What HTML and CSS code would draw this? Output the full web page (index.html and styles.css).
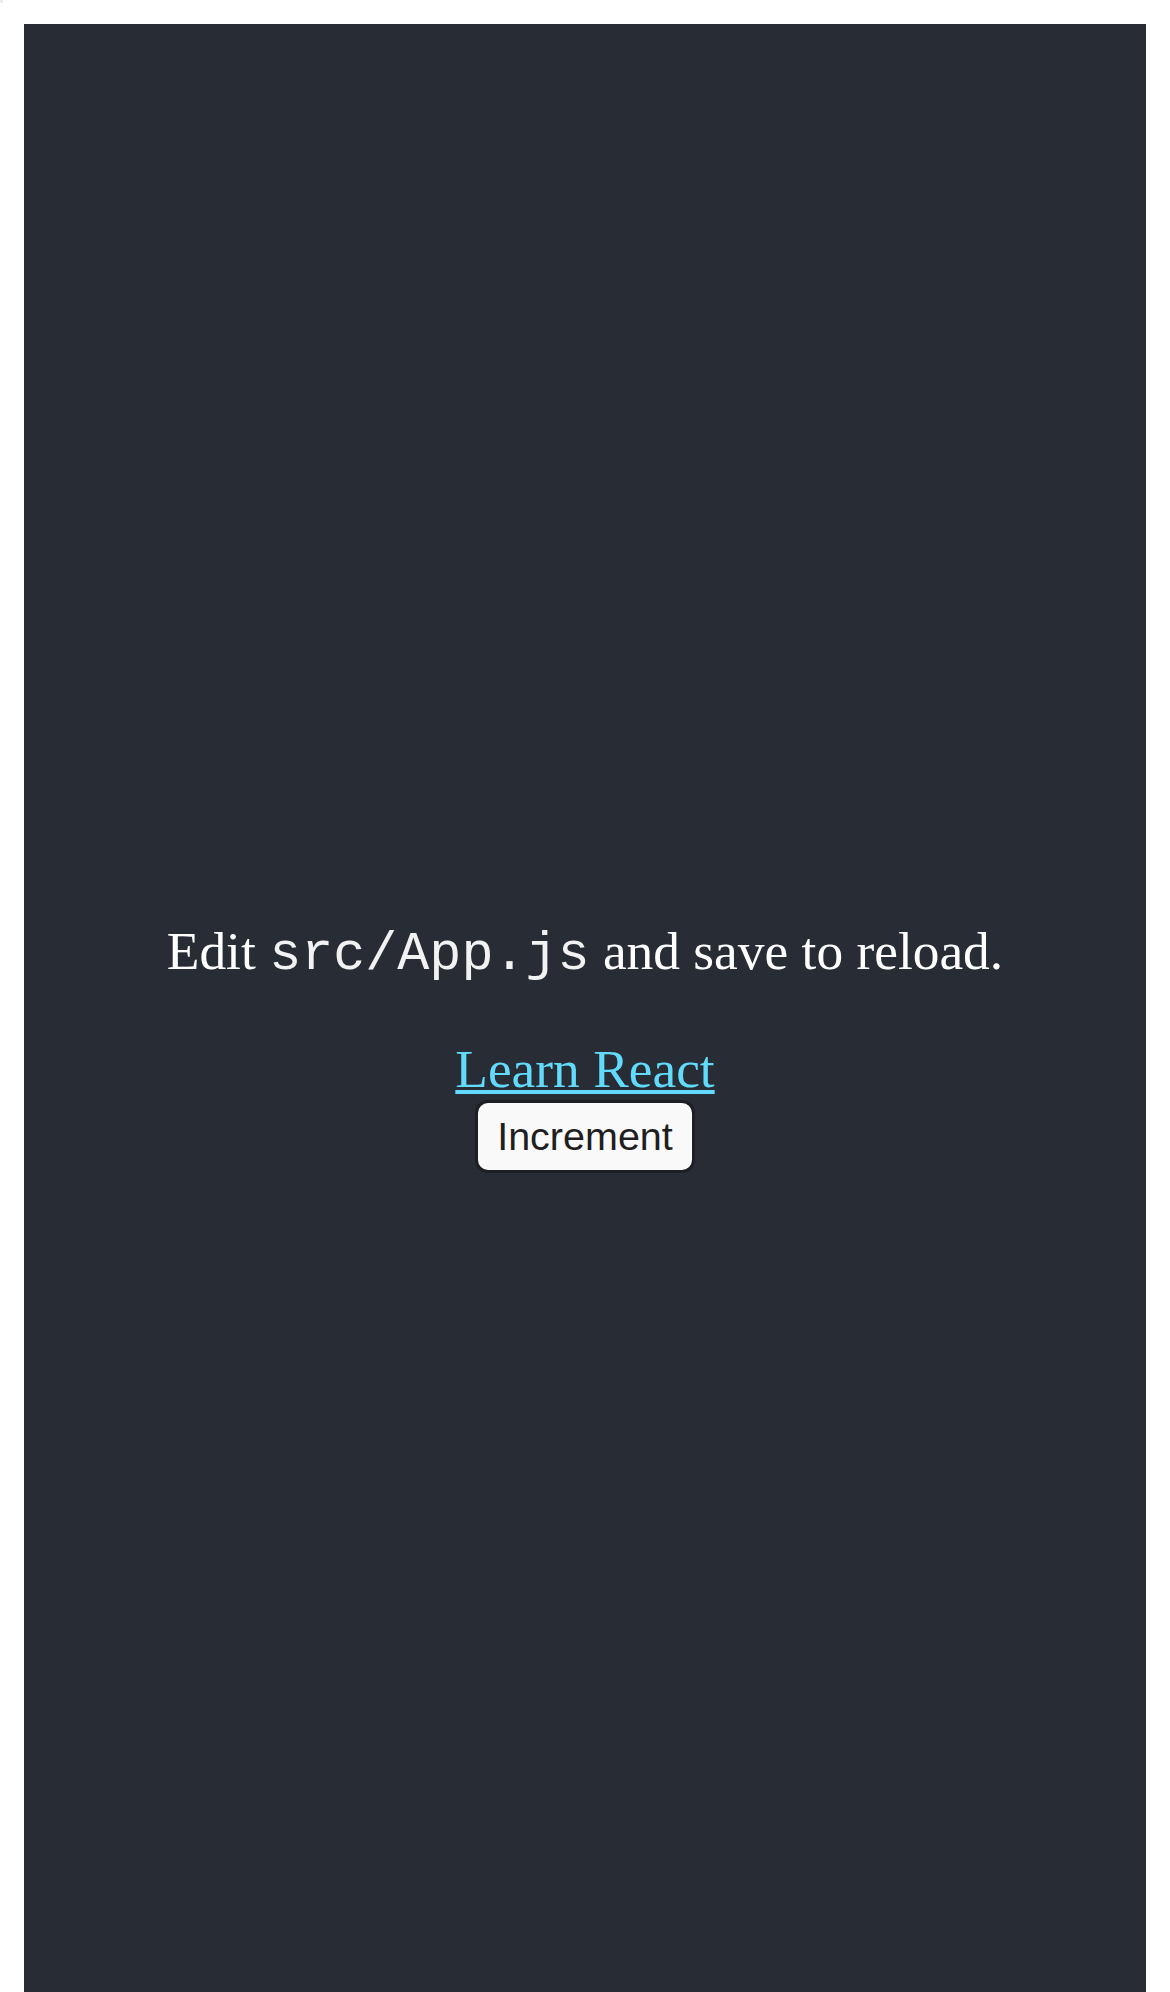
FILE: index.html
```html
<!DOCTYPE html>
<html lang="en">
<head>
<meta charset="utf-8">
<title>React App</title>
<link rel="stylesheet" href="styles.css">
</head>
<body>
<div class="corner-dot"></div>
<div class="app">
  <header class="app-header">
    <p class="intro">Edit <code>src/App.js</code> and save to reload.</p>
    <a class="app-link" href="#">Learn React</a>
    <button class="inc-btn" type="button">Increment</button>
  </header>
</div>
</body>
</html>
```
FILE: styles.css
```css
html, body {
  background: #ffffff;
}
body {
  margin: 24px;
  font-family: "Liberation Serif", "Times New Roman", serif;
}
.corner-dot {
  position: absolute;
  left: 0;
  top: 0;
  width: 3px;
  height: 3px;
  background: #ececec;
}
.app {
  text-align: center;
}
.app-header {
  background-color: #282c34;
  min-height: 1991px;
  display: flex;
  flex-direction: column;
  align-items: center;
  justify-content: center;
  font-size: 53.4px;
  color: #ffffff;
}
.intro {
  margin: 53.4px 0;
}
.intro code {
  font-family: "Liberation Mono", "Courier New", monospace;
  color: #f2f2f2;
}
.app-link {
  color: #61dafb;
  text-decoration-thickness: 4px;
  text-underline-offset: 3px;
}
.inc-btn {
  font-family: "Liberation Sans", Arial, sans-serif;
  font-size: 39.5px;
  color: #1f1f1f;
  background: #f9f9f9;
  border: 3px solid #1c1f24;
  border-radius: 13px;
  padding: 11px 19px;
  line-height: normal;
  margin: 0;
}
```
